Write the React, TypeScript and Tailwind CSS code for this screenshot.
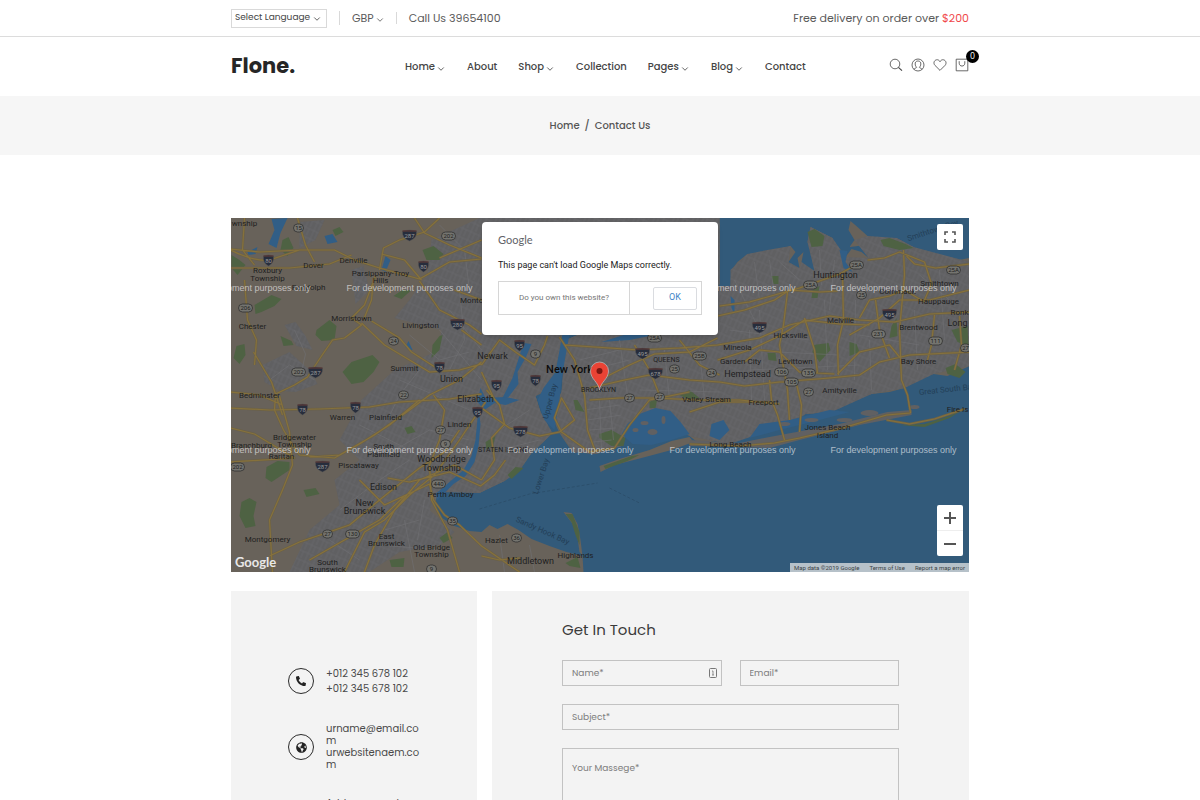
import React from "react";
import { FaPhoneAlt, FaGlobeAmericas } from "react-icons/fa";
import { ChevronDown } from "lucide-react";

type Label = [text: string, x: number, y: number, size?: number];
type Shield = [text: string, x: number, y: number];

const navItems = [
  { label: "Home", menu: true },
  { label: "About", menu: false },
  { label: "Shop", menu: true },
  { label: "Collection", menu: false },
  { label: "Pages", menu: true },
  { label: "Blog", menu: true },
  { label: "Contact", menu: false },
];

// The map is drawn in its own coordinate space, see the viewBox in <MapCanvas />
const landShapes = [
  // New Jersey, Manhattan and the Bronx
  "M231 218H720V284L712 300 690 318 640 322 600 330 566 334 560 360 553 385 545 392 536 396 541 412 548 428 553 433 543 443 532 453 521 469 505 481 490 488 480 493 462 492 446 487 438 494 435 506 441 517 455 526 470 531 482 532 490 525 498 529 508 524 519 530 532 539 550 546 567 552 583 556 584 572H231Z",
  // Brooklyn, Queens and Long Island
  "M566 340L572 350 566 372 562 392 556 402 554 420 560 433 566 442 573 452 597 454 612 447 622 446 628 430 642 421 658 416 675 424 690 436 700 444 716 441 730 444 745 438 765 432 790 426 806 414 832 412 850 402 872 394 890 392 905 388 918 378 934 374 948 376 970 366V258L950 262 940 254 926 254 914 247 897 238 880 239 868 236 858 227 851 221 849 230 855 240 850 247 867 245 869 258 862 252 852 249 846 257 836 249 833 238 823 233 811 227 808 242 814 257 815 271 808 273 802 262 804 252 798 258 800 268 791 270 789 262 796 252 791 246 777 251 768 250 760 256 748 254 738 262 732 270 731 286 736 302 734 314 728 300 718 286 690 318 600 326Z",
  // Rockaway and Sandy Hook
  "M600 466L620 459 650 450 672 441 690 437 694 442 672 450 642 458 615 465 601 472Z",
  "M564 512L572 513 578 524 581 540 583 556 580 552 578 538 574 525Z",
];

const urbanShapes = [
  "M480 218H720V284L712 300 690 318 640 322 600 330 566 334 560 360 553 385 536 396 541 412 553 433 532 453 521 469 505 481 480 493 440 492 430 510 455 532 440 545 400 552 370 572H290L310 530 340 505 335 480 360 460 340 440 362 400 395 370 440 350 442 330 395 318 410 300 428 275 432 240Z",
  "M566 340L562 392 554 420 573 452 597 454 622 446 628 430 658 416 690 436 730 444 765 432 806 414 832 412 872 394 905 388 934 374 970 366V262L940 254 914 247 897 238 868 236 855 240 869 258 846 257 833 238 811 227 808 242 815 271 802 262 800 268 789 262 791 246 768 250 748 254 731 270 731 286 718 286 690 318 600 326Z",
  "M263 365L290 352 312 372 318 384 296 392 280 391 265 382Z",
  "M285 325L296 322 306 336 313 350 297 346Z",
  "M352 270L364 266 370 290 356 304Z",
  "M300 222L325 220 316 240 300 248Z",
];

const waterShapes = [
  "M272 219L288 218 281 233 277 248 269 244 275 230Z",
  "M248 252L258 247 256 254 249 255Z",
  "M325 236L333 234 338 242 328 244Z",
  "M386 256L391 260 386 272 382 270Z",
  "M406 347L409 341 413 350 409 350Z",
  "M524 343L532 344 526 358 518 372 519 384 509 397 502 400 513 378Z",
  "M563 334L570 334 566 356 562 380 560 400 555 430 545 420 538 400 544 388 556 372Z",
  "M481 388L486 398 506 397 520 400 506 405 495 403 485 410 478 402Z",
  "M479 408L481 424 479 446 475 462 466 476 454 484 438 500 436 494 450 482 464 470 472 456 476 440Z",
  "M628 424L640 414 656 408 671 411 681 422 690 434 672 440 652 445 633 444 622 434Z",
  "M712 424L724 420 730 430 720 440 710 436Z",
  "M760 424L790 420 830 410 850 412 820 420 780 430 750 438Z",
  "M731 296L735 300 735 314 732 308Z",
  "M840 250L848 251 846 262 853 272 844 268Z",
  "M602 342L640 330 680 326 670 332 630 340Z",
];

const parkShapes = [
  "M283 240L289 237 294 248 288 256 281 250Z",
  "M255 305L272 295 282 299 275 306 262 312 256 314Z",
  "M317 330L330 320 337 326 335 340 322 341 316 335Z",
  "M343 372L352 362 373 355 380 362 374 372 364 382 352 384Z",
  "M423 250L434 246 444 254 440 260 427 260Z",
  "M394 296L403 290 412 290 402 299Z",
  "M433 345L440 336 443 335 440 350 432 358Z",
  "M237 346L245 344 246 355 240 364 234 358Z",
  "M267 467L278 461 290 462 290 470 272 482 266 478Z",
  "M304 490L316 488 320 494 307 497Z",
  "M242 502L250 498 257 502 254 516 256 526 246 528 240 516Z",
  "M232 255L240 260 246 265 238 275 232 268Z",
  "M281 336L292 341 294 345 284 346Z",
  "M333 230L340 227 344 232 336 236Z",
  "M405 428L412 426 416 432 408 434Z",
  "M440 538L448 532 453 538 444 543Z",
  "M390 560L405 558 404 567 392 567Z",
  "M808 232L815 229 825 236 823 246 812 247Z",
  "M881 240L890 238 906 244 914 248 900 250 884 246Z",
  "M814 345L829 343 831 350 820 362 813 352Z",
  "M850 342L857 344 860 352 850 356Z",
  "M892 326L897 318 898 336 890 338Z",
  "M952 330L968 326 969 346 958 342Z",
  "M946 368L956 364 966 372 960 378 948 374Z",
  "M768 353L776 353 777 361 769 360Z",
  "M813 290L820 286 818 298 812 298Z",
  "M772 276L779 276 779 284 774 284Z",
  "M574 400L578 400 585 412 576 410Z",
  "M600 434L612 430 626 438 624 446 612 446 600 438Z",
  "M508 475L516 467 524 468 512 479Z",
  "M486 442L496 436 494 444 487 450Z",
  "M566 514L573 514 580 532 580 545 576 535 572 522Z",
  "M566 563L578 557 581 568 570 566Z",
  "M604 466L632 456 640 455 628 461 606 469Z",
  "M650 402L658 398 656 408 650 408Z",
  "M680 395L690 390 700 398 690 400Z",
  "M900 425L925 424 950 416 966 408 950 418 925 427Z",
];

const highways = [
  "M231 250Q255 262 270 260L300 250 335 250 355 260 380 268 420 279 450 262 482 259",
  "M245 218L243 250 255 265M298 218L306 245 315 262",
  "M380 270L384 248 400 240 425 232 440 218",
  "M415 218L425 233 450 245 482 258M300 250L260 252 231 249",
  "M231 268L290 268 330 264 352 255",
  "M422 280L405 260 382 254M420 281L440 310 470 325 482 334",
  "M376 276L365 305 352 318 362 325 345 338 333 340 322 356 308 377 295 385 276 394 275 410 284 430 290 440 300 455 335 458 360 444 390 425 420 400",
  "M255 365L257 340 248 320 245 280M254 352L272 382 283 415",
  "M362 323L385 345 410 360 430 372 460 370 482 364",
  "M364 320L372 300 374 278M372 321L400 338 412 352 440 370",
  "M231 408L270 410 320 409 370 407 400 402 450 399 482 394",
  "M231 428L255 434 275 446 295 458 231 462",
  "M280 396L290 432 293 465 283 490 270 520 273 572",
  "M310 457L340 455 375 435 410 410 430 395 460 380 482 362",
  "M345 572L365 532 385 520 410 495 435 475 460 440 470 425 486 402",
  "M365 572L375 545 395 510 420 480 455 465 482 480",
  "M270 556L300 542 350 525 380 500 420 468 445 452 460 430",
  "M360 480L385 505 430 484 434 500 445 515 460 525 482 546 520 572",
  "M434 395L445 410 440 440 430 465 432 500 448 530 460 572",
  "M310 560L345 540 380 520 405 496",
  "M388 478L410 482 450 472 481 486 495 475 506 460",
  "M482 408L510 428 540 436 560 432 575 420 562 398 555 418 562 432 590 452 615 448 630 425 650 400 690 392",
  "M482 480L495 460 492 438 505 424 500 405 487 390",
  "M482 365L500 340 516 352 535 365 545 345 548 336",
  "M560 337L575 360 585 395 588 430 596 452M482 372L495 400",
  "M565 345L610 348 640 350 680 348 718 345 760 338 790 325 830 316 860 320 895 322 930 314 970 312",
  "M718 360L750 350 780 336 805 320 840 324 870 325",
  "M590 388L625 380 650 375 690 380 720 382 745 386 780 382 830 378 860 375 880 362 910 355 970 352",
  "M590 400L620 398 655 398 700 400 740 400 780 404",
  "M600 380L630 365 655 354 690 352 718 338M635 345L650 370 660 395M680 340L700 365 720 375",
  "M718 316L745 310 775 300 790 290 820 292 838 291",
  "M745 362L760 350 780 352 800 372 835 374",
  "M788 292L784 325 780 345 788 390 790 420M805 318L815 350 818 373",
  "M843 275L844 320 838 345 839 375",
  "M838 374L860 352 890 345 900 357M850 335L880 318 900 300 930 300 970 290",
  "M860 318L870 300 890 296 905 290 925 302M876 300L880 330 890 358",
  "M868 260L885 258 900 252 925 262 932 284 925 300M904 250L905 275 900 330 902 380 908 395 911 413",
  "M862 262L840 274 800 288 750 302 720 306M907 256L915 264 936 268 970 264",
  "M935 315L932 345 928 360M960 316L962 345 955 370",
  "M770 380L772 400 778 415 785 440M796 380L802 405 800 432",
  "M775 443L800 438 843 428 887 415 911 413M690 444L740 446 775 443",
  "M887 420L910 424 935 419 965 409M231 392L260 395 283 405",
  "M482 240L440 258M482 300L455 290M482 345L462 330",
  "M690 412L720 402 770 402M482 556L500 560 520 558",
];

const streets = [
  "M440 330L482 380M450 310L482 350M410 335L440 360 470 352M420 370L400 395 388 420M360 425L390 440 410 450",
  "M400 380L470 410M395 450L430 430 470 440M460 290L465 340 450 370M330 540L360 560M340 510L380 480 410 460",
  "M295 330L306 354 302 372M270 380L290 365 315 380M440 225L465 250 470 290M500 430L530 410M500 450L540 440",
  "M600 400L602 450M610 400L614 440M585 410L620 405M588 420L622 415M590 430L616 428M594 442L612 440",
  "M580 360L620 350M590 370L630 360M620 340L628 395M665 350L670 400M700 350L705 400M640 390L720 392",
  "M735 280L745 300 760 330M755 262L760 300M770 260L775 295M780 262L800 280M820 250L822 285M835 260L830 310",
  "M730 330L810 340M735 350L840 355M750 370L860 365M860 335L920 345M920 275L950 300M940 270L945 340",
  "M760 310L765 400M750 330L752 400M825 300L828 370M856 300L855 380M915 310L918 370M870 340L872 390",
  "M385 530L420 520M380 545L440 550M405 520L415 572M425 500L418 540M500 535L505 572M530 545L535 572",
];

const labels: Label[] = [
  ["wnship", 245, 226], ["Roxbury", 268, 273], ["Township", 268, 281], ["Dover", 314, 268],
  ["Denville", 354, 263], ["Parsippany-Troy", 381, 276], ["Hills", 381, 283], ["Randolph", 309, 290],
  ["Chester", 253, 329], ["Morristown", 352, 321], ["Livingston", 421, 328], ["Montc", 472, 303],
  ["Summit", 405, 371], ["Union", 452, 382, 9], ["Bedminster", 260, 398], ["Warren", 343, 420],
  ["Plainfield", 386, 420], ["Bridgewater", 295, 440], ["Township", 295, 447], ["Branchburg", 252, 448],
  ["Raritan", 282, 459], ["South", 384, 449], ["Plainfield", 384, 457], ["Piscataway", 359, 468],
  ["Elizabeth", 476, 402, 9], ["Linden", 460, 427], ["Woodbridge", 442, 462, 9], ["Township", 442, 471, 9],
  ["Edison", 384, 490, 9], ["Perth Amboy", 451, 497], ["New", 365, 506, 9], ["Brunswick", 365, 514, 9],
  ["Montgomery", 268, 542], ["East", 387, 539], ["Brunswick", 387, 546], ["Old Bridge", 432, 550],
  ["Township", 432, 557], ["South", 328, 565], ["Brunswick", 328, 572], ["Newark", 493, 359, 9],
  ["QUEENS", 667, 362, 7], ["BROOKLYN", 599, 392, 7], ["STATEN ISLAND", 504, 452, 7], ["Hazlet", 497, 543],
  ["Middletown", 531, 564, 9], ["Highlands", 576, 558], ["Valley Stream", 707, 402], ["Freeport", 764, 405],
  ["Long Beach", 731, 447], ["Jones Beach", 828, 430], ["Island", 828, 438], ["Huntington", 836, 278, 9],
  ["Smithtown", 940, 286], ["Commack", 898, 294], ["Hauppauge", 939, 304], ["Ronk", 960, 315],
  ["Long", 958, 326, 9], ["Melville", 841, 323], ["Brentwood", 919, 330], ["Hicksville", 791, 338],
  ["Mineola", 738, 350], ["Garden City", 741, 364], ["Levittown", 796, 364], ["Bay Shore", 919, 364],
  ["Hempstead", 748, 377, 9], ["Amityville", 840, 393], ["Fire Is", 958, 412],
];

const routeShields: Shield[] = [
  ["15", 299, 228], ["202", 449, 236], ["206", 246, 308], ["24", 394, 341], ["202", 299, 372],
  ["22", 404, 395], ["27", 441, 430], ["9", 446, 444], ["202", 238, 467], ["440", 439, 484],
  ["35", 453, 521], ["27", 328, 534], ["130", 353, 534], ["9", 432, 569], ["36", 517, 538],
  ["9", 536, 354], ["25A", 655, 338], ["25B", 700, 356], ["25", 675, 369], ["24", 712, 373],
  ["27", 630, 398], ["27", 660, 397], ["25A", 857, 265], ["25A", 954, 270], ["25A", 811, 285],
  ["25", 862, 295], ["231", 879, 334], ["111", 936, 341], ["27", 966, 348], ["106", 782, 372],
  ["105", 792, 382], ["135", 809, 373], ["27", 809, 392],
];

const interstateShields: Shield[] = [
  ["80", 269, 260], ["287", 410, 235], ["80", 424, 266], ["280", 458, 324], ["287", 316, 372],
  ["78", 440, 367], ["78", 303, 409], ["78", 356, 407], ["287", 323, 466], ["95", 478, 412],
  ["278", 521, 431], ["95", 520, 345], ["78", 536, 380], ["95", 497, 385], ["495", 643, 353],
  ["678", 656, 373], ["495", 760, 327], ["495", 890, 314],
];

const watermarkX = [248, 410, 571, 733, 894];
const watermarkY = [291, 453];

const MapCanvas: React.FC = () => (
  <svg
    viewBox="231 218 739 354"
    preserveAspectRatio="xMidYMid slice"
    className="block h-full w-full font-[Roboto,sans-serif]"
    role="img"
    aria-label="Map of New York"
  >
    <defs>
      <pattern id="blocks" width="9" height="9" patternUnits="userSpaceOnUse" patternTransform="rotate(24)">
        <path d="M0 2H9M3 0V9M7 2V9" stroke="#69696d" strokeWidth="0.6" />
      </pattern>
    </defs>
    <rect x="231" y="218" width="739" height="354" fill="#325a7a" />
    {landShapes.map((d) => (
      <path key={d} d={d} fill="#68625a" />
    ))}
    {urbanShapes.map((d) => (
      <path key={d} d={d} fill="#606062" />
    ))}
    {urbanShapes.map((d) => (
      <path key={`grid-${d}`} d={d} fill="url(#blocks)" />
    ))}
    <g fill="#4e6243">
      {parkShapes.map((d) => (
        <path key={d} d={d} />
      ))}
    </g>
    <g fill="#315e86">
      {waterShapes.map((d) => (
        <path key={d} d={d} />
      ))}
    </g>
    <g fill="#606062">
      <ellipse cx="645" cy="423" rx="4" ry="2" />
      <ellipse cx="653" cy="432" rx="5" ry="3" />
      <ellipse cx="664" cy="420" rx="2" ry="4" />
      <ellipse cx="636" cy="430" rx="3" ry="2" />
      <ellipse cx="785" cy="424" rx="6" ry="2" />
      <ellipse cx="812" cy="420" rx="7" ry="2" />
      <ellipse cx="845" cy="420" rx="8" ry="2" />
      <ellipse cx="870" cy="413" rx="9" ry="3" />
      <ellipse cx="915" cy="407" rx="5" ry="2" />
      <path d="M690 440L740 443 770 437 840 424 888 412 912 410 912 415 860 425 800 440 770 448 690 446Z" />
    </g>
    <path d={streets.join("")} fill="none" stroke="#707074" strokeWidth="0.6" />
    <g fill="none" strokeLinejoin="round">
      <path d={highways.join("")} stroke="#6b6147" strokeWidth="2.4" />
      <path d={highways.join("")} stroke="#86713c" strokeWidth="1.2" />
    </g>
    <path d="M480 509L530 494 598 483M610 488L640 503" fill="none" stroke="#2b4c68" strokeWidth="0.8" strokeDasharray="3 2" />

    {routeShields.map(([text, x, y]) => (
      <g key={`${text}-${x}-${y}`}>
        <rect
          x={x - (text.length > 2 ? 7 : 5)}
          y={y - 4}
          width={text.length > 2 ? 14 : 10}
          height="8"
          rx="4"
          fill="#74746f"
          stroke="#303030"
          strokeWidth="0.8"
        />
        <text x={x} y={y + 2} textAnchor="middle" fontSize="6" fill="#1e1e1e">{text}</text>
      </g>
    ))}
    {interstateShields.map(([text, x, y]) => {
      const r = text.length > 2 ? 7 : 5;
      return (
        <g key={`${text}-${x}-${y}`}>
          <path
            d={`M${x - r} ${y - 4}Q${x} ${y - 6} ${x + r} ${y - 4}Q${x + r + 1} ${y + 3} ${x} ${y + 6}Q${x - r - 1} ${y + 3} ${x - r} ${y - 4}Z`}
            fill="#272d3c"
            stroke="#555"
            strokeWidth="0.5"
          />
          <path d={`M${x - r} ${y - 4}H${x + r}`} stroke="#5d3a36" strokeWidth="1.2" />
          <text x={x} y={y + 3} textAnchor="middle" fontSize="6" fill="#9a9a9a">{text}</text>
        </g>
      );
    })}

    <g fill="#1f1f1f" textAnchor="middle">
      {labels.map(([text, x, y, size = 8]) => (
        <text key={`${text}-${x}-${y}`} x={x} y={y} fontSize={size}>{text}</text>
      ))}
      <text x="570" y="373" fontSize="11" fontWeight="500" fill="#0d0d0d">New York</text>
    </g>
    <g fill="#233f58" fontSize="8" textAnchor="middle">
      <text transform="translate(544 477) rotate(-72)">Lower Bay</text>
      <text transform="translate(553 402) rotate(-75)">Upper Bay</text>
      <text transform="translate(542 533) rotate(24)">Sandy Hook Bay</text>
      <text transform="translate(948 392) rotate(-6)">Great South Bay</text>
      <text transform="translate(934 233) rotate(-18)">Smithtown Bay</text>
    </g>

    <g fill="#ffffff" fillOpacity="0.6" fontSize="9" fontFamily="Liberation Sans, sans-serif" textAnchor="middle">
      {watermarkY.map((y) =>
        watermarkX.map((x) => (
          <text key={`${x}-${y}`} x={x} y={y}>For development purposes only</text>
        ))
      )}
    </g>

    <path
      d="M600 390C599 382 591 379 591 371A9 9 0 0 1 609 371C609 379 601 382 600 390Z"
      fill="#ea4335"
      stroke="#b5b5b5"
      strokeWidth="0.8"
    />
    <circle cx="600" cy="371" r="3" fill="#7c1712" />
  </svg>
);

const MapDialog: React.FC = () => (
  <div className="absolute left-1/2 top-1 w-[236px] -translate-x-1/2 rounded-sm bg-white px-4 pb-5 pt-3 font-[Roboto,sans-serif] shadow-md">
    <div className="font-[Lato,sans-serif] text-[11px] leading-3 text-[#5f6368]">Google</div>
    <p className="mt-[11px] whitespace-nowrap text-[9px] leading-4 text-[#212121]">
      This page can't load Google Maps correctly.
    </p>
    <div className="mt-2 flex h-[34px] items-center border border-[#d6d6d6]">
      <a href="#owner" className="flex h-full w-[131px] items-center justify-center border-r border-[#d6d6d6] text-[8px] text-[#757575]">
        Do you own this website?
      </a>
      <button type="button" className="ml-auto mr-1 h-[23px] w-11 rounded-xs border border-[#dadce0] text-[9px] text-[#4285c8]">
        OK
      </button>
    </div>
  </div>
);

const MapSection: React.FC = () => (
  <section className="relative h-[354px] overflow-hidden">
    <MapCanvas />
    <MapDialog />
    <button type="button" aria-label="Toggle fullscreen view" className="absolute right-1.5 top-1.5 flex size-[26px] items-center justify-center rounded-xs bg-white">
      <svg viewBox="0 0 12 12" className="size-3" fill="none" stroke="#555" strokeWidth="1.6">
        <path d="M1 4V1H4M8 1H11V4M11 8V11H8M4 11H1V8" />
      </svg>
    </button>
    <div className="absolute bottom-4 right-1.5 flex w-[26px] flex-col rounded-xs bg-white">
      <button type="button" aria-label="Zoom in" className="flex h-[26px] items-center justify-center border-b border-[#eeeeee]">
        <svg viewBox="0 0 12 12" className="size-3" stroke="#555" strokeWidth="2">
          <path d="M0 6H12M6 0V12" />
        </svg>
      </button>
      <button type="button" aria-label="Zoom out" className="flex h-[25px] items-center justify-center">
        <svg viewBox="0 0 12 12" className="size-3" stroke="#555" strokeWidth="2">
          <path d="M0 6H12" />
        </svg>
      </button>
    </div>
    <div className="absolute bottom-0.5 left-1 font-[Lato,sans-serif] text-[13px] font-bold leading-4 text-[#e8e8e8]">Google</div>
    <div className="absolute bottom-0 right-0 flex h-[9px] items-center gap-2.5 bg-[#b6c1c9] px-1 font-[Roboto,sans-serif] text-[6px] text-[#3a3f44]">
      <span>Map data ©2019 Google</span>
      <a href="#terms">Terms of Use</a>
      <a href="#report">Report a map error</a>
    </div>
  </section>
);

const TopBar: React.FC = () => (
  <div className="border-b border-[#dcdcdc]">
    <div className="mx-auto flex h-9 max-w-[738px] items-center justify-between text-[11px] text-[#5a5a5a]">
      <div className="flex items-center">
        <div className="relative">
          <select
            aria-label="Select Language"
            className="block h-[19px] w-24 appearance-none border border-[#d9d9d9] bg-white pl-[3px] text-[9px] text-[#444]"
          >
            <option>Select Language</option>
          </select>
          <ChevronDown className="pointer-events-none absolute right-[5px] top-[5px] size-2.5 text-[#444]" />
        </div>
        <button type="button" className="ml-3 flex items-center gap-px border-l border-[#d9d9d9] pl-3 leading-3">
          GBP
          <ChevronDown className="mt-1 size-2.5" />
        </button>
        <span className="ml-[11px] border-l border-[#d9d9d9] pl-3 leading-3">Call Us 39654100</span>
      </div>
      <p>
        Free delivery on order over <span className="text-[#f0474a]">$200</span>
      </p>
    </div>
  </div>
);

const HeaderIcons: React.FC = () => (
  <div className="ml-auto flex items-center gap-2 pb-1 text-[#444]">
    <button type="button" aria-label="Search">
      <svg viewBox="0 0 14 14" className="size-3.5" fill="none" stroke="currentColor" strokeWidth="0.8">
        <circle cx="6" cy="6" r="4.8" />
        <path d="M9.4 9.4L13 12.6" strokeWidth="1.2" />
      </svg>
    </button>
    <button type="button" aria-label="Account">
      <svg viewBox="0 0 14 14" className="size-3.5" fill="none" stroke="currentColor" strokeWidth="0.8">
        <circle cx="7" cy="7" r="6" />
        <path d="M3 11.4C3.4 10 5.6 10.2 5.6 9.2C4.2 8 4 6.4 4.3 4.8C4.8 2.4 9.2 2.4 9.7 4.8C10 6.4 9.8 8 8.4 9.2C8.4 10.2 10.6 10 11 11.4" />
      </svg>
    </button>
    <button type="button" aria-label="Wishlist">
      <svg viewBox="0 0 14 14" className="size-3.5" fill="none" stroke="currentColor" strokeWidth="0.8">
        <path d="M7 12.4L1.9 7.3C.2 5.4.9 2.4 3.5 1.8C5 1.5 6.3 2.3 7 3.7C7.7 2.3 9 1.5 10.5 1.8C13.1 2.4 13.8 5.4 12.1 7.3Z" />
      </svg>
    </button>
    <button type="button" aria-label="Cart" className="relative">
      <svg viewBox="0 0 14 14" className="size-3.5" fill="none" stroke="currentColor" strokeWidth="0.8">
        <path d="M1.2 1.2H12.8V12.8H1.2Z" />
        <path d="M4.2 3.2V5.2C4.2 9 9.8 9 9.8 5.2V3.2" />
      </svg>
      <span className="absolute -right-2.5 -top-2 flex size-[13px] items-center justify-center rounded-full bg-black pt-px text-[8px] leading-none text-white">
        0
      </span>
    </button>
  </div>
);

const Header: React.FC = () => (
  <header className="mx-auto flex h-[59px] max-w-[738px] items-center">
    <a href="#home" className="w-[174px] shrink-0 pb-0.5 text-[21px] font-bold leading-6 text-[#262626]">
      Flone.
    </a>
    <nav className="flex items-center gap-[21px] text-[10px] font-medium text-[#444]">
      {navItems.map(({ label, menu }) => (
        <a key={label} href={`#${label.toLowerCase()}`} className="flex items-center gap-px">
          {label}
          {menu && <ChevronDown className="mt-1 size-2.5" />}
        </a>
      ))}
    </nav>
    <HeaderIcons />
  </header>
);

const contactItems = [
  {
    icon: <FaPhoneAlt className="size-2.5" />,
    lines: ["+012 345 678 102", "+012 345 678 102"],
    className: "leading-[15px]",
  },
  {
    icon: <FaGlobeAmericas className="size-[11px]" />,
    lines: ["urname@email.com", "urwebsitenaem.com"],
    className: "leading-3 break-all",
  },
  {
    icon: <FaGlobeAmericas className="size-[11px]" />,
    lines: ["Address goes here,", "street, Crossroad 123."],
    className: "leading-3",
  },
];

const ContactInfo: React.FC = () => (
  <aside className="flex flex-col gap-[27px] bg-[#f3f3f3] pb-16 pl-[57px] pr-[54px] pt-[75px]">
    {contactItems.map(({ icon, lines, className }) => (
      <div key={lines[0]} className="flex items-center gap-3">
        <span className="flex size-[26px] shrink-0 items-center justify-center rounded-full border border-[#2b2b2b] text-[#222]">
          {icon}
        </span>
        <div className={`text-[10px] text-[#4a4a4a] ${className}`}>
          {lines.map((line, i) => (
            <p key={i}>{line}</p>
          ))}
        </div>
      </div>
    ))}
  </aside>
);

const fieldStyle =
  "block w-full border border-[#c2c2c2] bg-transparent px-[9px] text-[9px] text-[#333] placeholder:text-[#7d7d7d] outline-none";

const ContactForm: React.FC = () => (
  <form className="bg-[#f3f3f3] px-[70px] pb-12 pt-7">
    <h2 className="text-[15px] leading-[22px] text-[#3a3a3a]">Get In Touch</h2>
    <div className="mt-[19px] grid grid-cols-2 gap-[18px]">
      <div className="relative">
        <input type="text" aria-label="Name" placeholder="Name*" className={`${fieldStyle} h-[26px]`} />
        <svg viewBox="0 0 8 10" className="pointer-events-none absolute right-[5px] top-2 h-2.5 w-2" fill="none" stroke="#777">
          <rect x="0.5" y="0.5" width="7" height="9" rx="1" />
          <path d="M3 3H4V7M3 7H5" strokeWidth="0.8" />
        </svg>
      </div>
      <input type="email" aria-label="Email" placeholder="Email*" className={`${fieldStyle} h-[26px]`} />
      <input type="text" aria-label="Subject" placeholder="Subject*" className={`${fieldStyle} col-span-2 h-[26px]`} />
      <textarea aria-label="Your message" placeholder="Your Massege*" className={`${fieldStyle} col-span-2 h-32 resize-none pt-[13px]`} />
    </div>
    <button type="submit" className="mt-6 bg-[#333] px-8 py-2 text-[11px] text-white">
      SEND
    </button>
  </form>
);

const App: React.FC = () => {
  return (
    <div className="min-h-screen bg-white font-[Poppins,Inter,sans-serif]">
      <TopBar />
      <Header />
      <div className="flex h-[59px] items-center justify-center gap-[5px] bg-[#f6f6f6] text-[10px] font-medium text-[#555]">
        <a href="#home">Home</a>
        <span>/</span>
        <span>Contact Us</span>
      </div>
      <main className="mx-auto max-w-[738px] pb-16 pt-[63px]">
        <MapSection />
        <div className="mt-[19px] grid grid-cols-[246fr_477fr] gap-[15px]">
          <ContactInfo />
          <ContactForm />
        </div>
      </main>
    </div>
  );
};

export default App;
